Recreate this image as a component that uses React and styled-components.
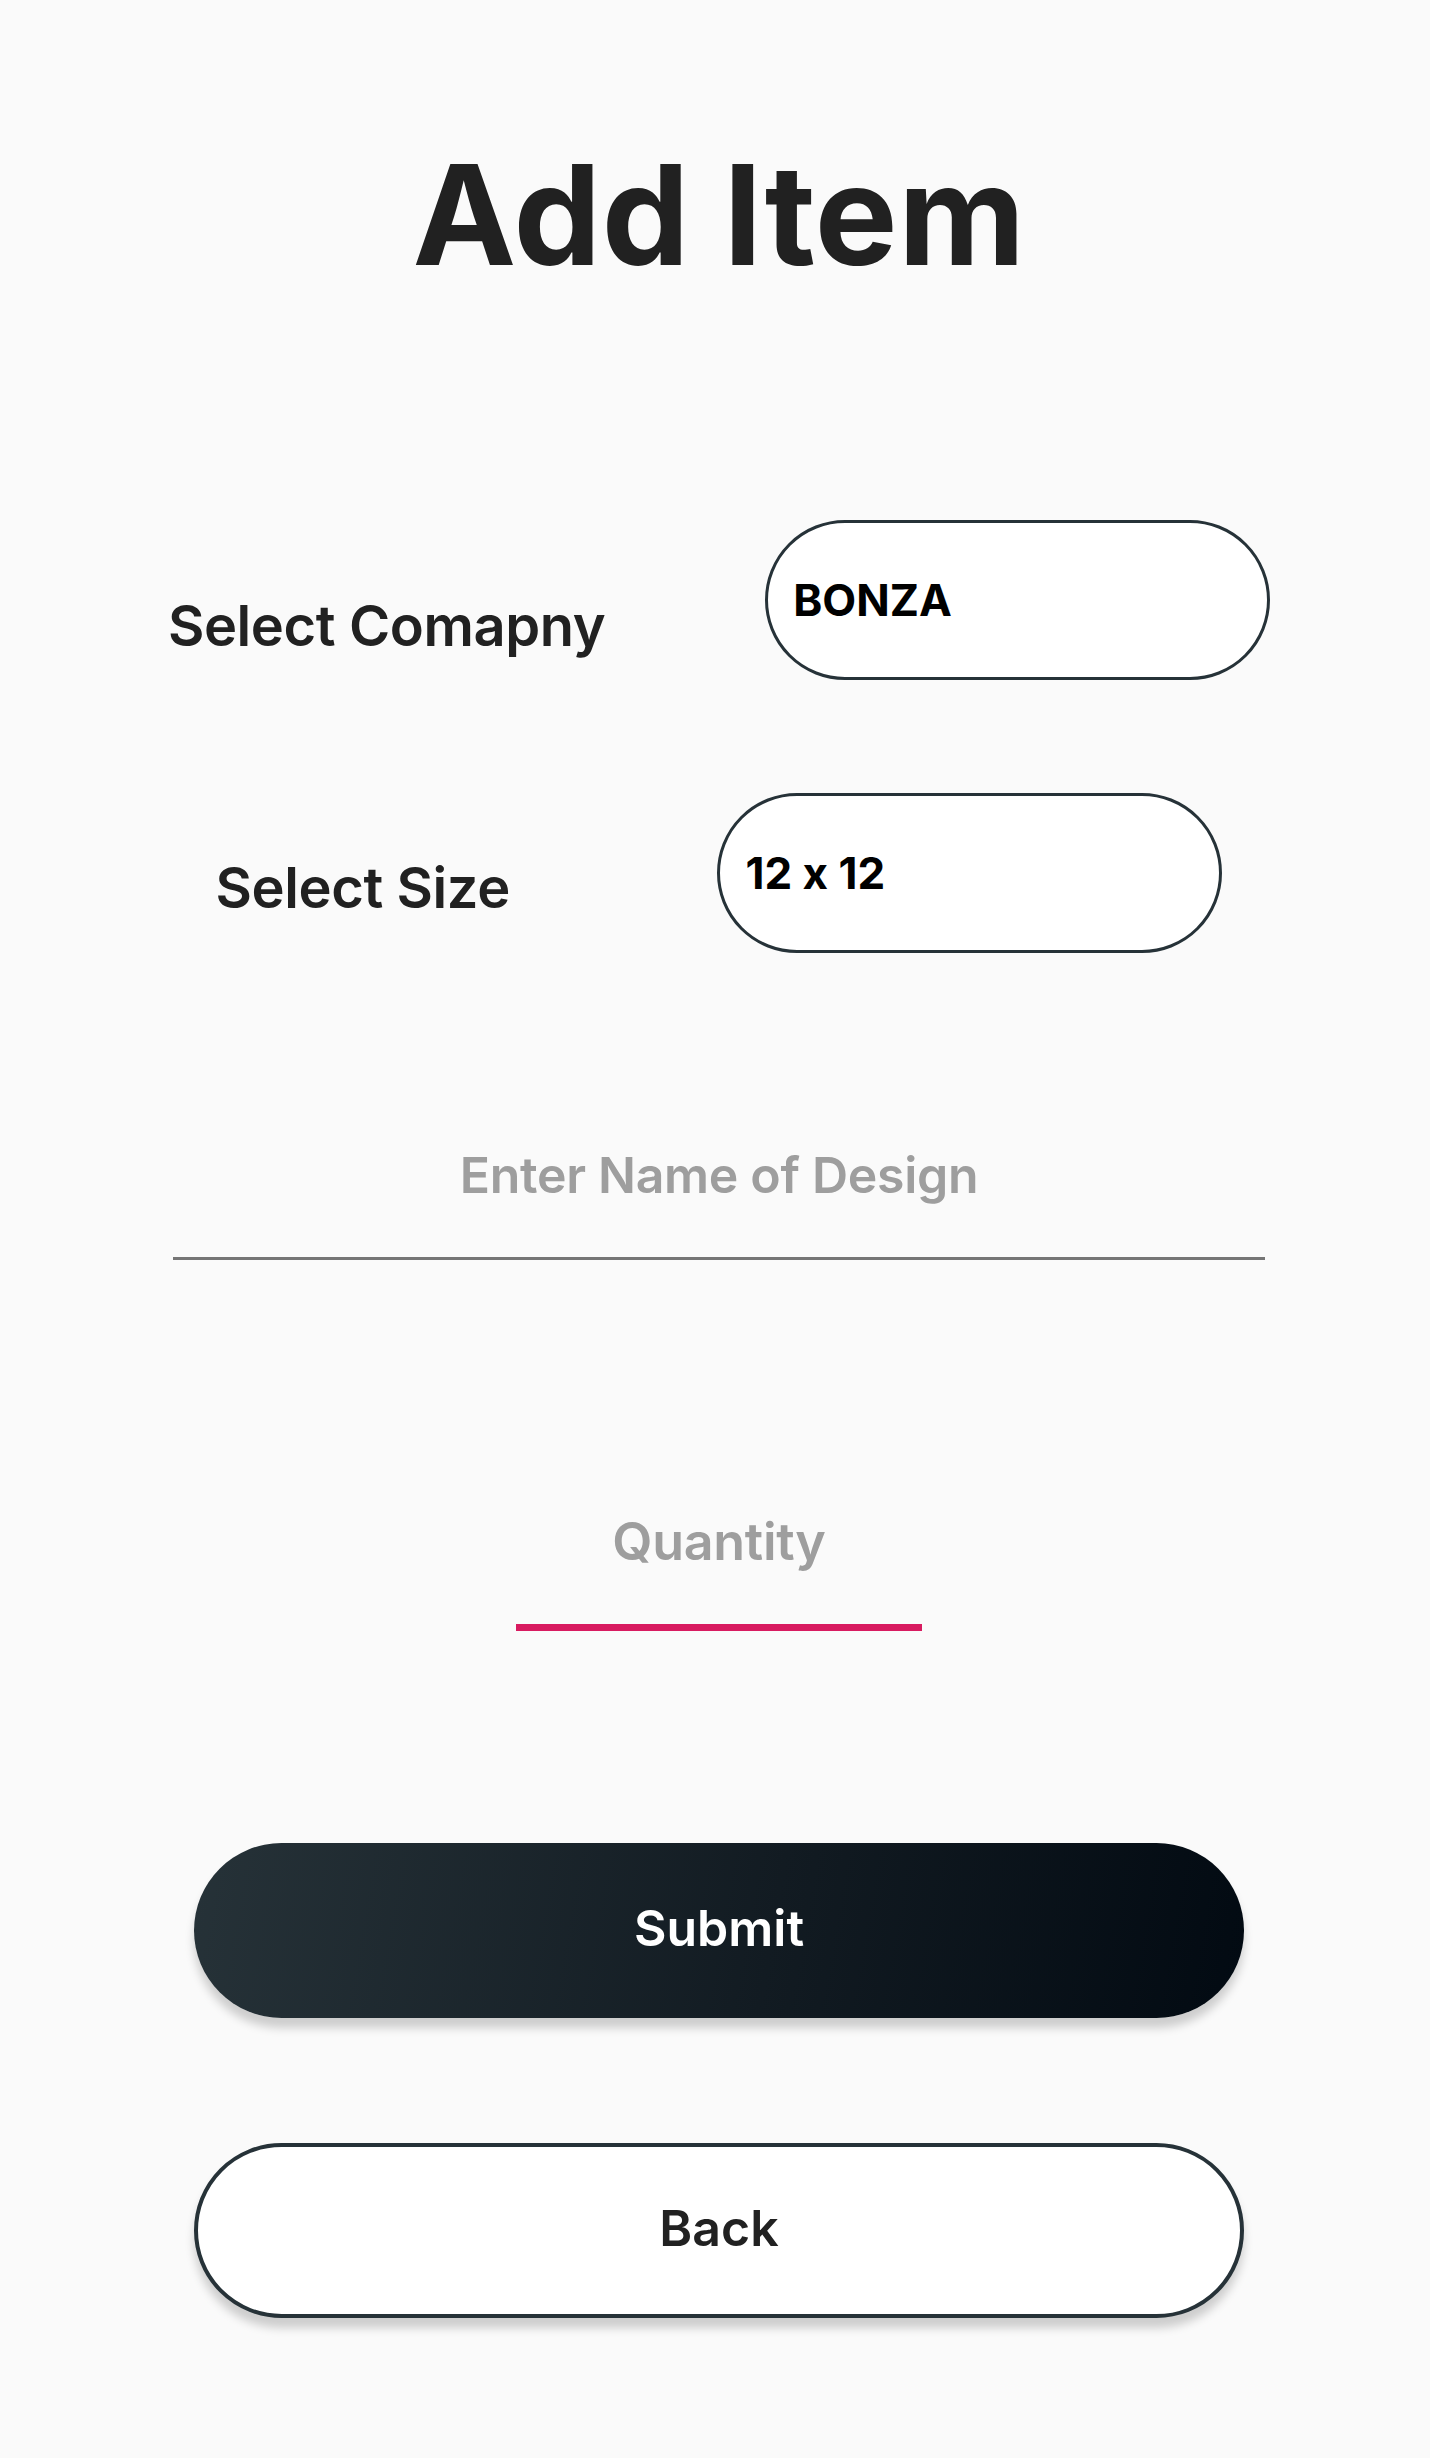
import React from "react";
import styled, { createGlobalStyle } from "styled-components";

const Global = createGlobalStyle`
  html, body {
    margin: 0;
    padding: 0;
    background: #fafafa;
  }
  * { box-sizing: border-box; }
`;

const Page = styled.main`
  width: 1430px;
  min-height: 2458px;
  padding-left: 8px;
  background: #fafafa;
  display: flex;
  flex-direction: column;
  font-family: Inter, "Open Sans", Roboto, sans-serif;
  font-feature-settings: "calt" 0;
  color: #212121;
`;

const Title = styled.h1`
  margin: 145px 0 0;
  font-size: 139px;
  line-height: 1;
  font-weight: 700;
  text-align: center;
  letter-spacing: 0.5px;
  color: #212121;
`;

const Row = styled.div`
  display: flex;
  justify-content: space-evenly;
  align-items: flex-start;
  margin-top: ${(p) => p.$top}px;
`;

const Label = styled.span`
  font-size: 56px;
  line-height: 1.2;
  font-weight: 600;
  letter-spacing: -0.4px;
  color: #212121;
  margin-top: ${(p) => p.$offset}px;
`;

const Select = styled.div`
  width: 505px;
  height: 160px;
  border: 3px solid #263238;
  border-radius: 80px;
  background: #ffffff;
  display: flex;
  align-items: center;
  padding-left: 25px;
  font-size: 44px;
  font-weight: 700;
  color: #000;
`;

const Field = styled.div`
  align-self: center;
  width: ${(p) => p.$width}px;
  margin-top: ${(p) => p.$top}px;
  padding-bottom: ${(p) => p.$pad}px;
  border-bottom: ${(p) => p.$line}px solid ${(p) => p.$color};
  text-align: center;
  font-size: ${(p) => p.$size}px;
  line-height: 1.2;
  font-weight: 600;
  letter-spacing: -0.3px;
  color: #9e9e9e;
`;

const Button = styled.button`
  align-self: center;
  width: 1050px;
  height: 175px;
  margin-top: ${(p) => p.$top}px;
  padding: 0 0 6px;
  border-radius: 88px;
  font-family: inherit;
  font-size: 50px;
  font-weight: 600;
  cursor: pointer;
  box-shadow: 0 10px 10px rgba(0, 0, 0, 0.18);
  ${(p) =>
    p.$primary
      ? `
    border: none;
    color: #ffffff;
    background: linear-gradient(100deg, #263238 0%, #121b22 55%, #020a12 100%);
  `
      : `
    border: 4px solid #263238;
    color: #212121;
    background: #ffffff;
  `}
`;

export default function App() {
  return (
    <Page>
      <Global />
      <Title>Add Item</Title>
      <Row $top={236}>
        <Label $offset={73}>Select Comapny</Label>
        <Select>BONZA</Select>
      </Row>
      <Row $top={113}>
        <Label $offset={62}>Select Size</Label>
        <Select>12 x 12</Select>
      </Row>
      <Field $width={1092} $top={192} $pad={52} $line={3} $color="#757575" $size={50}>
        Enter Name of Design
      </Field>
      <Field $width={406} $top={251} $pad={51} $line={7} $color="#d81b60" $size={52}>
        Quantity
      </Field>
      <Button $primary $top={212}>Submit</Button>
      <Button $top={125}>Back</Button>
    </Page>
  );
}
